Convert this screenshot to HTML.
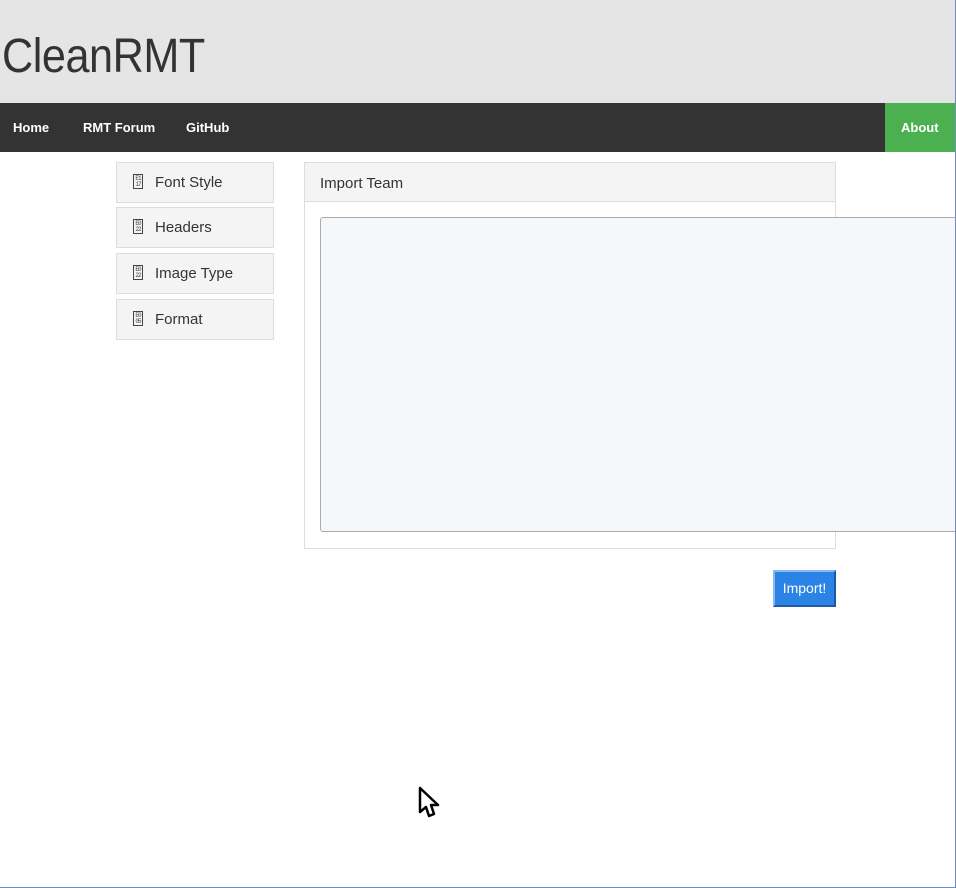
<!DOCTYPE html>
<html><head><meta charset="utf-8"><style>
*{box-sizing:border-box;margin:0;padding:0}
html,body{width:956px;height:888px;overflow:hidden;background:#fff;font-family:"Liberation Sans",sans-serif}
.abs{position:absolute}
#hdr{left:0;top:0;width:956px;height:103px;background:#e5e5e5}
#title{left:2px;top:29px;font-size:48px;font-weight:300;color:#333;letter-spacing:-0.5px;transform:scaleX(0.9);transform-origin:0 0;font-family:"Liberation Sans",sans-serif}
#nav{left:0;top:103px;width:956px;height:49px;background:#333}
.nl{position:absolute;top:17px;font-size:13px;font-weight:bold;color:#fff}
#about{left:885px;top:103px;width:71px;height:49px;background:#4caf50;color:#fff;font-size:13px;font-weight:bold;padding:17px 0 0 16px}
.side{position:absolute;left:116px;width:158px;height:41px;background:#f4f4f4;border:1px solid #ddd;font-size:15px;color:#333}
.side span.t{position:absolute;left:38px;top:11px}
.ic{position:absolute;left:16px;top:11px;width:10px;height:15px;border:1px solid #444;font-size:6px;line-height:6px;text-align:center;color:#444;font-family:"Liberation Mono",monospace;padding-top:1px;letter-spacing:-1px}
#panel{left:304px;top:162px;width:532px;height:387px;border:1px solid #ddd}
#ph{position:absolute;left:0;top:0;width:530px;height:39px;background:#f4f4f4;border-bottom:1px solid #ddd;font-size:15px;color:#333;padding:12px 0 0 15px}
#ta{left:320px;top:217px;width:650px;height:315px;background:#f5f8fb;border:1px solid #aaa;border-radius:3px}
#btn{left:773px;top:570px;width:63px;height:37px;background:#2a83e5;border:2px solid;border-color:#8ab8f0 #1c5aa8 #1c5aa8 #8ab8f0;color:#fff;font-size:14px;text-align:center;padding-top:8px}
#fr{left:955px;top:0;width:1px;height:888px;background:#6f8cc4}
#fb{left:0;top:887px;width:956px;height:1px;background:#6f8cc4}
</style></head><body>
<div id="hdr" class="abs"></div>
<div id="title" class="abs">CleanRMT</div>
<div id="nav" class="abs">
<span class="nl" style="left:13px">Home</span>
<span class="nl" style="left:83px">RMT Forum</span>
<span class="nl" style="left:186px">GitHub</span>
</div>
<div id="about" class="abs">About</div>
<div class="side" style="top:162px"><div class="ic">E1<br>17</div><span class="t">Font Style</span></div>
<div class="side" style="top:207px"><div class="ic">E0<br>22</div><span class="t">Headers</span></div>
<div class="side" style="top:253px"><div class="ic">E0<br>22</div><span class="t">Image Type</span></div>
<div class="side" style="top:299px"><div class="ic">E0<br>05</div><span class="t">Format</span></div>
<div id="panel" class="abs"><div id="ph">Import Team</div></div>
<div id="ta" class="abs"></div>
<div id="btn" class="abs">Import!</div>
<svg class="abs" style="left:418px;top:786px" width="24" height="34" viewBox="0 0 24 34"><path d="M2 2 L2 26 L8 21 L11 30 L16 28 L13 19 L20 19 Z" fill="#fff" stroke="#000" stroke-width="2.5" stroke-linejoin="round"/></svg>
<div id="fr" class="abs"></div>
<div id="fb" class="abs"></div>
</body></html>
